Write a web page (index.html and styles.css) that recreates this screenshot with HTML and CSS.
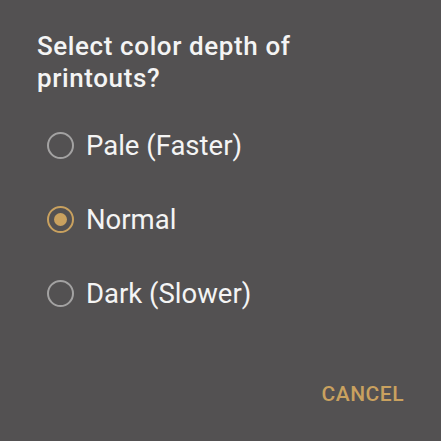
FILE: index.html
```html
<!DOCTYPE html>
<html lang="en">
<head>
  <meta charset="UTF-8" />
  <title>Select color depth</title>
  <link rel="stylesheet" href="styles.css">
</head>
<body>

<div class="dialog">
  <h2 class="title">Select color depth of printouts?</h2>

  <div class="options">
    <label class="option">
      <span class="radio"></span>
      <span class="label">Pale (Faster)</span>
    </label>
    <label class="option checked">
      <span class="radio"></span>
      <span class="label">Normal</span>
    </label>
    <label class="option">
      <span class="radio"></span>
      <span class="label">Dark (Slower)</span>
    </label>
  </div>

  <div class="actions">
    <button class="btn">CANCEL</button>
  </div>
</div>

</body>
</html>
```

FILE: styles.css
```css
* { box-sizing: border-box; }
html, body {
  margin: 0;
  height: 100%;
  background: #535152;
}
body {
  font-family: 'Roboto', 'Liberation Sans', sans-serif;
  color: #fff;
}

.dialog {
  padding: 30px 0 0 37px;
  height: 441px;
  display: flex;
  flex-direction: column;
}

.title {
  margin: 0;
  width: 340px;
  font-size: 26px;
  font-weight: 500;
  line-height: 32px;
  letter-spacing: 0.6px;
  color: #f4f4f4;
}

.options {
  margin-top: 24px;
  display: flex;
  flex-direction: column;
  gap: 20px;
}
.option {
  display: flex;
  align-items: center;
  height: 54px;
  gap: 12px;
  padding-left: 10px;
}
.radio {
  width: 27px;
  height: 27px;
  border: 2.5px solid #a3a2a2;
  border-radius: 50%;
  display: flex;
  align-items: center;
  justify-content: center;
}
.option.checked .radio {
  border-color: #c9a15f;
}
.option.checked .radio::after {
  content: '';
  width: 13px;
  height: 13px;
  border-radius: 50%;
  background: #c9a15f;
}
.label {
  font-size: 27.5px;
  color: #f4f4f4;
}

.actions {
  margin-top: auto;
  margin-bottom: 35px;
  padding-right: 37px;
  display: flex;
  justify-content: flex-end;
}
.btn {
  background: none;
  border: none;
  padding: 0;
  font-family: inherit;
  font-size: 21px;
  font-weight: 500;
  letter-spacing: 0.5px;
  color: #c9a15f;
}
```
